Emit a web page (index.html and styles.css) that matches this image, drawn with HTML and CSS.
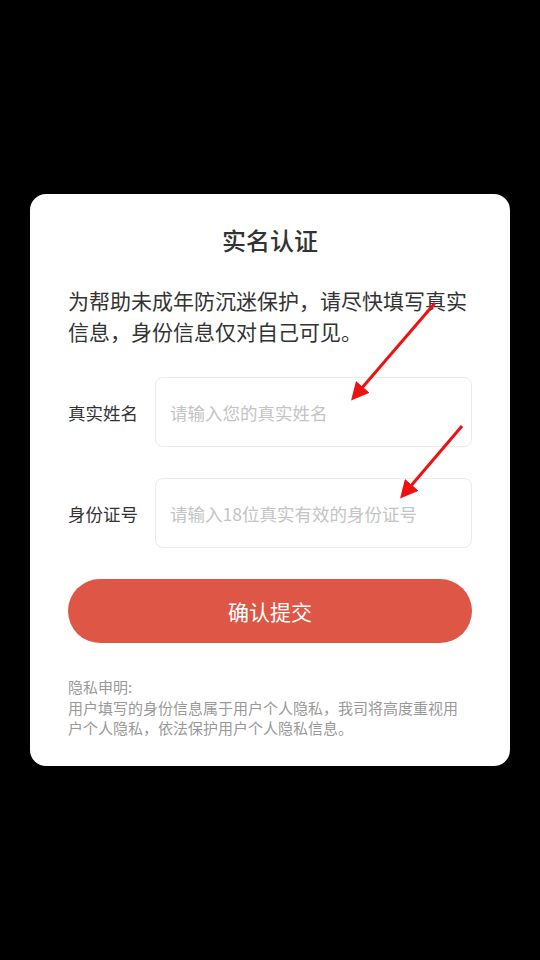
FILE: index.html
```html
<!DOCTYPE html>
<html lang="zh-CN">
  <head>
    <meta charset="UTF-8" />
    <meta name="viewport" content="width=device-width, initial-scale=1.0" />
    <title>实名认证</title>
    <link rel="stylesheet" href="styles.css">
  </head>
  <body>
    <div class="dialog">
      <h2 class="dialog-title">实名认证</h2>
      <p class="dialog-tip">为帮助未成年防沉迷保护，请尽快填写真实信息，身份信息仅对自己可见。</p>
      <div class="form-row">
        <label class="form-label">真实姓名</label>
        <input class="form-input" type="text" placeholder="请输入您的真实姓名" />
      </div>
      <div class="form-row">
        <label class="form-label">身份证号</label>
        <input class="form-input" type="text" placeholder="请输入18位真实有效的身份证号" />
      </div>
      <button class="submit-btn">确认提交</button>
      <div class="privacy">
        <p>隐私申明:</p>
        <p>用户填写的身份信息属于用户个人隐私，我司将高度重视用户个人隐私，依法保护用户个人隐私信息。</p>
      </div>
    </div>

    <svg class="arrows" width="540" height="960" viewBox="0 0 540 960">
      <defs>
        <marker id="head" markerWidth="6" markerHeight="6" refX="4" refY="3" orient="auto">
          <path d="M0,0 L6,3 L0,6 z" fill="#ee1111" />
        </marker>
      </defs>
      <line x1="435" y1="303" x2="355" y2="396" stroke="#ee1111" stroke-width="3" marker-end="url(#head)" />
      <line x1="462" y1="426" x2="404" y2="494" stroke="#ee1111" stroke-width="3" marker-end="url(#head)" />
    </svg>
  </body>
</html>
```

FILE: styles.css
```css
* {
  margin: 0;
  padding: 0;
  box-sizing: border-box;
}
body {
  width: 540px;
  height: 960px;
  background-color: #000000;
  font-family: "Noto Sans CJK SC", "Liberation Sans", sans-serif;
  display: flex;
  justify-content: center;
  padding-top: 194px;
}
.dialog {
  width: 480px;
  height: 572px;
  background-color: #ffffff;
  border-radius: 16px;
  padding: 26px 38px 0;
}
.dialog-title {
  text-align: center;
  font-size: 24px;
  font-weight: 500;
  color: #333333;
  line-height: 40px;
}
.dialog-tip {
  margin-top: 25px;
  font-size: 21px;
  line-height: 31px;
  color: #333333;
}
.form-row {
  display: flex;
  align-items: center;
  margin-top: 30px;
}
.form-row + .form-row {
  margin-top: 31px;
}
.form-label {
  width: 87px;
  flex: 0 0 87px;
  font-size: 17.5px;
  color: #333333;
}
.form-input {
  flex: 1;
  height: 70px;
  border: 1px solid #ebebeb;
  border-radius: 8px;
  padding: 0 14px;
  font-family: inherit;
  font-size: 17.5px;
  color: #333333;
  outline: none;
}
.form-input::placeholder {
  color: #c4c4c4;
}
.submit-btn {
  display: block;
  width: 100%;
  height: 64px;
  margin-top: 31px;
  border: none;
  border-radius: 32px;
  background-color: #de5646;
  color: #ffffff;
  font-family: inherit;
  font-size: 21px;
}
.privacy {
  margin-top: 34px;
  font-size: 15px;
  line-height: 20.5px;
  color: #999999;
}
.arrows {
  position: absolute;
  top: 0;
  left: 0;
  pointer-events: none;
}
```
